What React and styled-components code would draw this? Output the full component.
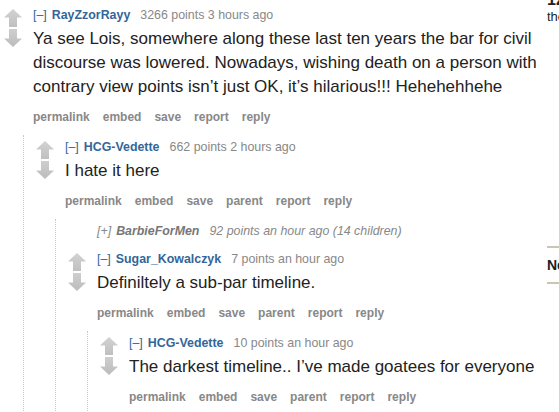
import React from "react";
import styled, { createGlobalStyle } from "styled-components";

const Global = createGlobalStyle`
  html, body { margin: 0; padding: 0; background: #fff; overflow: hidden; }
  body { font-family: "Liberation Sans", Arial, sans-serif; }
`;

const Page = styled.div`
  display: flex;
  align-items: flex-start;
  width: 559px;
  height: 412px;
  overflow: hidden;
`;

const Main = styled.div`
  width: 545px;
  flex-shrink: 0;
  padding-top: 3px;
`;

const Sidebar = styled.aside`
  width: 300px;
  flex-shrink: 0;
  margin-left: 2px;
  color: #222;
`;

const SideStat = styled.div`
  margin-top: -9px;
  font-size: 16px;
  font-weight: bold;
  line-height: 18px;
  white-space: nowrap;
`;

const SideText = styled.div`
  font-size: 13px;
  line-height: 16px;
  white-space: nowrap;
  margin-bottom: 221px;
`;

const SideRule = styled.div`
  height: 2px;
  background: #cbc6b2;
`;

const SideHeading = styled.h3`
  margin: 0;
  padding: 8px 0;
  font-size: 14px;
  line-height: 18px;
  font-weight: bold;
  color: #1c1c24;
  white-space: nowrap;
`;

const CommentBox = styled.div`
  padding: 4px 0 8px ${(p) => (p.$top ? 4 : 12)}px;
`;

const Row = styled.div`
  display: flex;
`;

const Midcol = styled.div`
  width: 29px;
  flex-shrink: 0;
  display: flex;
  flex-direction: column;
  gap: 2px;
  padding-top: 2px;
`;

const Entry = styled.div`
  flex: 1;
  min-width: 0;
`;

const Tagline = styled.div`
  font-size: 12.4px;
  line-height: 16px;
  color: #888;
  white-space: nowrap;
  font-style: ${(p) => (p.$collapsed ? "italic" : "normal")};
`;

const Expand = styled.span`
  color: ${(p) => (p.$collapsed ? "#888" : "#369")};
  margin-right: 5px;
`;

const Author = styled.span`
  font-weight: bold;
  color: ${(p) => (p.$collapsed ? "#777" : "#369")};
  margin-right: 10px;
`;

const Body = styled.div`
  margin: 4px 0 10px;
  font-size: 17px;
  line-height: 24px;
  color: #222;
`;

const Actions = styled.ul`
  list-style: none;
  margin: 0;
  padding: 0;
  display: flex;
  gap: 13px;
  font-size: 12px;
  line-height: 16px;
  font-weight: bold;
  color: #888;
`;

const Child = styled.div`
  margin-left: 19px;
  margin-top: 10px;
  border-left: 1px dotted #c4c6d6;
`;

const ArrowSvg = styled.svg`
  display: block;
`;

const Arrow = ({ down }) => (
  <ArrowSvg width="18" height="18" viewBox="0 0 18 18">
    <defs>
      <linearGradient id={down ? "gd" : "gu"} x1="0" y1="0" x2="0" y2="1">
        <stop offset="0" stopColor={down ? "#cecece" : "#d2d2d2"} />
        <stop offset="1" stopColor={down ? "#bcbcbc" : "#c0c0c0"} />
      </linearGradient>
    </defs>
    <path
      d={
        down
          ? "M5 0 L13 0 L13 9.5 L18 9.5 L9 18 L0 9.5 L5 9.5 Z"
          : "M9 0 L18 8.5 L13 8.5 L13 18 L5 18 L5 8.5 L0 8.5 Z"
      }
      fill={`url(#${down ? "gd" : "gu"})`}
    />
  </ArrowSvg>
);

const thread = {
  author: "RayZzorRayy",
  meta: "3266 points 3 hours ago",
  body:
    "Ya see Lois, somewhere along these last ten years the bar for civil discourse was lowered. Nowadays, wishing death on a person with contrary view points isn\u2019t just OK, it\u2019s hilarious!!! Hehehehhehe",
  actions: ["permalink", "embed", "save", "report", "reply"],
  children: [
    {
      author: "HCG-Vedette",
      meta: "662 points 2 hours ago",
      body: "I hate it here",
      actions: ["permalink", "embed", "save", "parent", "report", "reply"],
      children: [
        {
          collapsed: true,
          author: "BarbieForMen",
          meta: "92 points an hour ago (14 children)",
        },
        {
          author: "Sugar_Kowalczyk",
          meta: "7 points an hour ago",
          body: "Definiltely a sub-par timeline.",
          actions: ["permalink", "embed", "save", "parent", "report", "reply"],
          children: [
            {
              author: "HCG-Vedette",
              meta: "10 points an hour ago",
              body: "The darkest timeline.. I\u2019ve made goatees for everyone",
              actions: ["permalink", "embed", "save", "parent", "report", "reply"],
            },
          ],
        },
      ],
    },
  ],
};

const Comment = ({ c, top }) => (
  <CommentBox $top={top}>
    <Row>
      <Midcol>
        {!c.collapsed && (
          <>
            <Arrow />
            <Arrow down />
          </>
        )}
      </Midcol>
      <Entry>
        <Tagline $collapsed={c.collapsed}>
          <Expand $collapsed={c.collapsed}>{c.collapsed ? "[+]" : "[\u2013]"}</Expand>
          <Author $collapsed={c.collapsed}>{c.author}</Author>
          {c.meta}
        </Tagline>
        {!c.collapsed && (
          <>
            <Body>{c.body}</Body>
            <Actions>
              {c.actions.map((a) => (
                <li key={a}>{a}</li>
              ))}
            </Actions>
          </>
        )}
      </Entry>
    </Row>
    {c.children && (
      <Child>
        {c.children.map((k, i) => (
          <Comment key={i} c={k} />
        ))}
      </Child>
    )}
  </CommentBox>
);

export default function App() {
  return (
    <Page>
      <Global />
      <Main>
        <Comment c={thread} top />
      </Main>
      <Sidebar>
        <SideStat>12,704 readers</SideStat>
        <SideText>the front page of the internet</SideText>
        <SideRule />
        <SideHeading>New to reddit?</SideHeading>
        <SideRule />
      </Sidebar>
    </Page>
  );
}
